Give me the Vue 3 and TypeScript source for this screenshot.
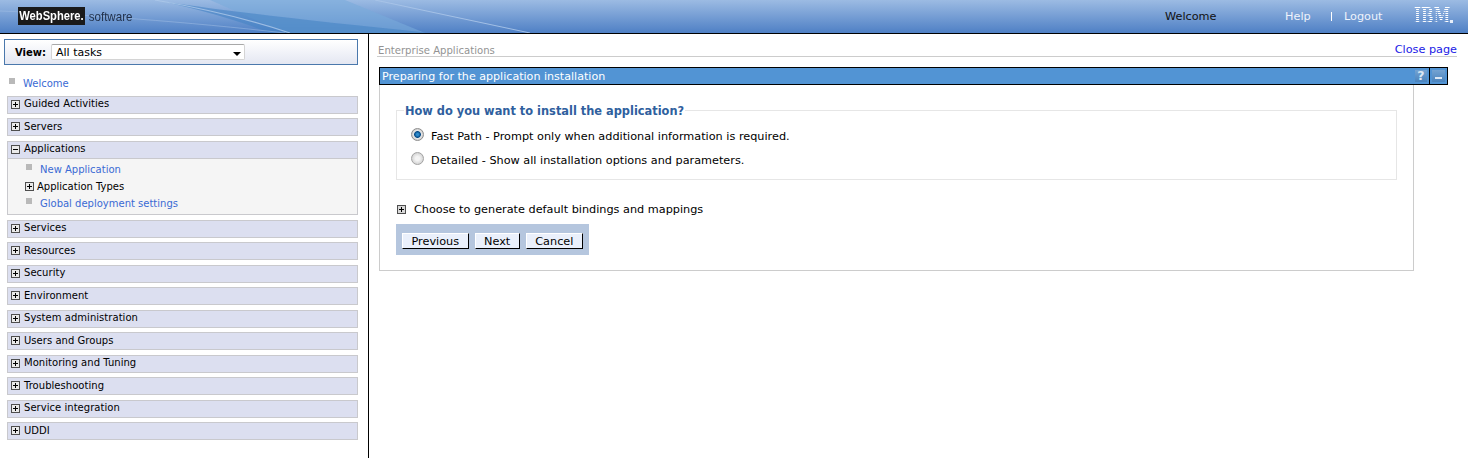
<template>
  <div class="page">
    <header class="banner">
      <svg class="swoosh" viewBox="0 0 540 33" preserveAspectRatio="none" aria-hidden="true">
        <defs>
          <filter id="soft" x="-5%" y="-20%" width="110%" height="140%">
            <feGaussianBlur stdDeviation="0.7" />
          </filter>
        </defs>
        <g filter="url(#soft)">
          <path d="M210 0H345L425 33H285Z" fill="#78aadb" opacity=".6" />
          <path d="M165 2C235 12 320 22 430 33H270C240 21 205 11 165 2Z" fill="#4683c5" opacity=".6" />
          <path d="M155 0C195 7 240 16 290 33" stroke="#aec9ea" stroke-width="1.2" fill="none" opacity=".8" />
          <path d="M375 0L530 33" stroke="#a9c4e8" stroke-width="1" fill="none" opacity=".9" />
          <path d="M0 11C80 14 190 22 285 33" stroke="#a3c0e6" stroke-width="1" fill="none" opacity=".5" />
        </g>
      </svg>
      <div class="brand">
        <span class="brand-box"><span>WebSphere.</span></span>
        <span class="brand-sub">software</span>
      </div>
      <nav class="banner-nav">
        <span class="banner-welcome">Welcome</span>
        <a class="banner-link help">Help</a>
        <span class="banner-sep"></span>
        <a class="banner-link logout">Logout</a>
        <span class="ibm-wrap"><span class="ibm">IBM</span><i class="ibm-dot"></i></span>
      </nav>
    </header>

    <div class="columns">
      <aside class="sidebar">
        <div class="view-box">
          <label class="view-label">View:</label>
          <div class="view-select">
            <span>All tasks</span>
            <i class="caret"></i>
          </div>
        </div>

        <div class="welcome"><i class="bullet"></i><a class="link">Welcome</a></div>

        <section v-for="item in navItems" :key="item.label" class="nav-group">
          <div class="nav-head">
            <i class="toggle" :class="item.children ? 'minus' : 'plus'"></i>
            <span class="nav-label">{{ item.label }}</span>
          </div>
          <ul v-if="item.children" class="nav-body">
            <li v-for="child in item.children" :key="child.label" class="nav-child">
              <i v-if="child.expandable" class="toggle plus"></i>
              <i v-else class="bullet"></i>
              <a :class="child.expandable ? 'plain' : 'link'">{{ child.label }}</a>
            </li>
          </ul>
        </section>
      </aside>

      <main class="content">
        <div class="crumbs">
          <span>Enterprise Applications</span>
          <a class="close-page">Close page</a>
        </div>

        <div class="panel">
          <div class="panel-title">
            <span>Preparing for the application installation</span>
            <div class="panel-tools">
              <span class="tool">?</span>
              <span class="tool-sep"></span>
              <span class="tool tool-min"><i></i></span>
            </div>
          </div>
          <div class="panel-body">
            <fieldset class="question">
              <legend>How do you want to install the application?</legend>
              <label v-for="opt in installOptions" :key="opt.text" class="radio-row">
                <span class="radio" :class="{ on: opt.checked }"></span>
                <span>{{ opt.text }}</span>
              </label>
            </fieldset>

            <div class="bindings">
              <i class="toggle plus"></i>
              <span>Choose to generate default bindings and mappings</span>
            </div>

            <div class="button-bar">
              <button v-for="b in buttons" :key="b" type="button" class="btn">{{ b }}</button>
            </div>
          </div>
        </div>
      </main>
    </div>
  </div>
</template>

<script setup lang="ts">
interface NavChild {
  label: string
  expandable?: boolean
}

interface NavItem {
  label: string
  children?: NavChild[]
}

const navItems: NavItem[] = [
  { label: 'Guided Activities' },
  { label: 'Servers' },
  {
    label: 'Applications',
    children: [
      { label: 'New Application' },
      { label: 'Application Types', expandable: true },
      { label: 'Global deployment settings' }
    ]
  },
  { label: 'Services' },
  { label: 'Resources' },
  { label: 'Security' },
  { label: 'Environment' },
  { label: 'System administration' },
  { label: 'Users and Groups' },
  { label: 'Monitoring and Tuning' },
  { label: 'Troubleshooting' },
  { label: 'Service integration' },
  { label: 'UDDI' }
]

const installOptions = [
  { text: 'Fast Path - Prompt only when additional information is required.', checked: true },
  { text: 'Detailed - Show all installation options and parameters.', checked: false }
]

const buttons = ['Previous', 'Next', 'Cancel']
</script>

<style>
html,
body {
  margin: 0;
  background: #fff;
  overflow: hidden;
}
</style>

<style scoped>
.page {
  width: 1468px;
  height: 458px;
  display: flex;
  flex-direction: column;
  font-family: "DejaVu Sans", Verdana, sans-serif;
  font-size: 10px;
  color: #000;
}

/* banner */
.banner {
  position: relative;
  height: 33px;
  flex: none;
  display: flex;
  align-items: center;
  justify-content: space-between;
  border-bottom: 1px solid #000;
  background: linear-gradient(#9cbbe3, #4f80c5);
  overflow: hidden;
}

.swoosh {
  position: absolute;
  left: 0;
  top: 0;
  width: 540px;
  height: 33px;
}

.brand {
  position: relative;
  display: flex;
  align-items: center;
  margin: -1px 0 0 18px;
}

.brand-box {
  width: 67px;
  height: 18px;
  line-height: 18px;
  display: flex;
  justify-content: center;
  background: #1a1a1a;
  color: #fff;
  font-family: "Liberation Sans", Arial, sans-serif;
  font-size: 13px;
  font-weight: 700;
}

.brand-box span {
  display: block;
  flex: none;
  transform: scaleX(0.86);
}

.brand-sub {
  margin-left: 1px;
  color: #22324c;
  font-family: "Liberation Sans", Arial, sans-serif;
  font-size: 13px;
  transform: scaleX(0.89);
}

.banner-nav {
  position: relative;
  display: flex;
  align-items: center;
  height: 33px;
  padding-right: 15px;
  font-size: 11.25px;
}

.banner-welcome {
  width: 120px;
  color: #111;
}

.banner-link {
  color: #eef3fb;
}

.help {
  width: 46px;
}

.logout {
  width: 38px;
}

.banner-sep {
  width: 1px;
  height: 9px;
  background: #fff;
  margin-right: 12px;
}

.ibm-wrap {
  position: relative;
  display: block;
  width: 39px;
  height: 17px;
  margin-left: 32px;
  margin-top: -3px;
}

.ibm {
  display: block;
  width: 53px;
  font-family: "DejaVu Serif", "Liberation Serif", serif;
  font-size: 22px;
  font-weight: 700;
  line-height: 17px;
  color: transparent;
  background: repeating-linear-gradient(#fff 0 1px, transparent 1px 2px);
  -webkit-background-clip: text;
  background-clip: text;
  transform: scaleX(0.68);
  transform-origin: 0 0;
}

.ibm-dot {
  position: absolute;
  right: 0;
  bottom: 1px;
  width: 3px;
  height: 3px;
  background: #e6eef9;
}

/* columns */
.columns {
  flex: 1;
  display: flex;
  min-height: 0;
}

.sidebar {
  width: 368px;
  flex: none;
  border-right: 1px solid #000;
  padding-top: 5px;
}

.view-box {
  margin-left: 4px;
  width: 352px;
  height: 24px;
  display: flex;
  align-items: center;
  border: 1px solid #4a78ac;
  background: linear-gradient(#fff, #e4e7f2);
}

.view-label {
  margin-left: 10px;
  width: 36px;
  font-weight: 700;
}

.view-select {
  width: 188px;
  height: 14px;
  display: flex;
  align-items: center;
  justify-content: space-between;
  padding-left: 4px;
  background: #fff;
  border: 1px solid #d4d4d4;
  border-top-color: #a8a8a8;
  border-radius: 2px;
  font-size: 11px;
}

.caret {
  width: 0;
  height: 0;
  margin: 4px 3px 0 0;
  border: 4px solid transparent;
  border-top: 4px solid #000;
  border-bottom: 0;
}

.welcome {
  display: flex;
  align-items: center;
  height: 16px;
  margin: 10px 0 4.9px 9px;
}

.bullet {
  width: 6px;
  height: 6px;
  background: #b9b9b9;
  margin-top: -5px;
  flex: none;
}

.welcome .link {
  margin-left: 8px;
}

.link {
  color: #3a6ad4;
}

.plain {
  color: #000;
}

.nav-group {
  margin: 0 10px 4.5px 7px;
  border: 1px solid #c9c9cd;
  background: #f5f5f5;
}

.nav-head {
  height: 16px;
  display: flex;
  align-items: flex-start;
  gap: 4px;
  padding-left: 3px;
  line-height: 13px;
  background: #dcdff0;
}

.nav-head .toggle {
  margin-top: 3px;
}

.nav-label {
  margin-top: 0.3px;
  letter-spacing: 0.04px;
}

.toggle {
  box-sizing: border-box;
  display: block;
  width: 9px;
  height: 9px;
  flex: none;
  border: 1px solid #4e4e4e;
  background-color: #eaeaea;
  background-repeat: no-repeat;
}

.toggle.plus {
  background-image: linear-gradient(#000, #000), linear-gradient(#000, #000);
  background-size: 5px 1px, 1px 5px;
  background-position: 1px 3px, 3px 1px;
}

.toggle.minus {
  background-image: linear-gradient(#000, #000);
  background-size: 5px 1px;
  background-position: 1px 3px;
}

.nav-body {
  list-style: none;
  margin: 0;
  padding: 2px 0 2.5px;
  border-top: 1px solid #c9c9cd;
}

.nav-child {
  height: 17px;
  display: flex;
  align-items: center;
  padding-left: 18px;
}

.nav-child .bullet {
  margin-right: 8px;
}

.nav-child .toggle {
  margin-left: -1px;
  margin-right: 3px;
}

/* content */
.content {
  flex: 1;
  min-width: 0;
  padding: 10px 11px 0 8px;
}

.crumbs {
  display: flex;
  justify-content: space-between;
  align-items: flex-end;
  height: 12px;
  padding-left: 1px;
  border-bottom: 1px solid #ccc;
  color: #939393;
  font-size: 10.1px;
}

.close-page {
  color: #1a1ae6;
  font-size: 11.25px;
}

.panel {
  margin: 10px 43px 0 2px;
  font-size: 11.25px;
}

.panel-title {
  height: 16px;
  margin-right: -34px;
  display: flex;
  align-items: center;
  justify-content: space-between;
  padding-left: 2px;
  border: 1px solid #000;
  background: #5294d4;
  color: #fff;
  font-size: 11.1px;
}

.panel-tools {
  display: flex;
  align-items: flex-start;
  height: 16px;
}

.tool {
  width: 12px;
  height: 12px;
  margin-top: 2px;
  background: linear-gradient(#74a3d2, #4a83bd);
  color: #dce8f5;
  font-size: 12.5px;
  font-weight: 700;
  line-height: 12px;
  text-align: center;
}

.tool-sep {
  width: 1px;
  height: 16px;
  margin: 0 2px 0 2px;
  background: #000;
}

.tool-min {
  width: 13px;
  margin-right: 2px;
  display: flex;
  align-items: flex-end;
  justify-content: center;
}

.tool-min i {
  display: block;
  width: 7px;
  height: 2px;
  margin-bottom: 3px;
  background: #dce8f5;
}

.panel-body {
  height: 168px;
  border: 1px solid #ccc;
  border-top: 0;
  padding: 17px 16px 0;
}

.question {
  margin: 0;
  padding: 6px 0 0 14px;
  height: 70px;
  border: 1px solid #e6e6e6;
}

.question legend {
  margin-left: -7px;
  padding: 2px 1px 0;
  color: #2f5f9e;
  font-size: 11.4px;
  font-weight: 700;
}

.radio-row {
  display: flex;
  align-items: center;
  gap: 7px;
  height: 24px;
}

.radio {
  box-sizing: border-box;
  width: 13px;
  height: 13px;
  margin-top: -4px;
  border-radius: 50%;
  border: 1px solid #a2a2a2;
  background: radial-gradient(circle at 50% 50%, #f4f4f4 0 2px, #d6d6d6 5.5px);
}

.radio.on {
  border-color: #8d8d8d;
  background: radial-gradient(circle at 50% 50%, #2e8ccc 0 1px, #064a86 3px, #e8e8e8 3.8px, #cfcfcf 5.5px);
}

.bindings {
  display: flex;
  align-items: center;
  gap: 8px;
  height: 14px;
  margin-top: 22px;
  padding-left: 1px;
}

.bindings .toggle {
  background-color: #d9d9d9;
}

.button-bar {
  display: inline-flex;
  gap: 6px;
  margin-top: 8px;
  padding: 9px 6px 6px;
  background: #b5c6de;
}

.btn {
  height: 16px;
  padding: 1px 8.5px 0;
  margin: 0;
  font: inherit;
  line-height: 13px;
  color: #000;
  background: #eaf0fb;
  border: 1px solid #fff;
  border-right-color: #000;
  border-bottom-color: #000;
  border-radius: 0;
}
</style>
